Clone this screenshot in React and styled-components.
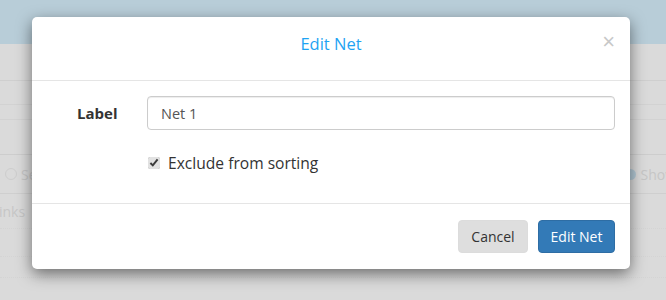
import React from "react";
import styled, { createGlobalStyle } from "styled-components";

const FONT = `"Open Sans", "Noto Sans", sans-serif`;

const GlobalStyle = createGlobalStyle`
  html, body {
    margin: 0;
    padding: 0;
    background: #dadada;
    font-family: ${FONT};
  }
  #root {
    width: 666px;
    height: 300px;
    overflow: hidden;
    position: relative;
  }
`;

const rows = [
  { h: 36, line: "#cfcfcf" },
  { h: 23, line: "#d2d2d2" },
  { h: 14, line: "#d2d2d2" },
  { h: 34, line: "#cdcdcd" },
  { h: 38, line: "#cfcfcf", left: "Se", right: "Show" },
  { h: 34, line: "#d4d4d4", left: "inks", dotted: true },
  { h: 27, line: "#d4d4d4", dotted: true },
  { h: 20, line: "#d4d4d4", dotted: true },
];

export default function App() {
  return (
    <>
      <GlobalStyle />
      <Page>
        <NavBar />
        <Content>
          {rows.map((r, i) => (
            <Row key={i} $h={r.h} $line={r.line} $dotted={r.dotted}>
              <Ghost>
                {r.left === "Se" && <Radio />}
                {r.left}
              </Ghost>
              <Ghost>
                {r.right && <CheckDot />}
                {r.right}
              </Ghost>
            </Row>
          ))}
        </Content>
      </Page>

      <Modal>
        <Header>
          <Title>Edit Net</Title>
          <Close>×</Close>
        </Header>
        <Body>
          <FieldRow>
            <FieldLabel>Label</FieldLabel>
            <Input defaultValue="Net 1" />
          </FieldRow>
          <CheckRow>
            <Check type="checkbox" defaultChecked />
            <CheckText>Exclude from sorting</CheckText>
          </CheckRow>
        </Body>
        <Footer>
          <Button $w={70}>Cancel</Button>
          <Button $w={77} $primary>Edit Net</Button>
        </Footer>
      </Modal>
    </>
  );
}

const Page = styled.div`
  width: 666px;
  height: 300px;
  display: flex;
  flex-direction: column;
`;

const NavBar = styled.div`
  height: 44px;
  background: #b8cdd8;
  flex-shrink: 0;
`;

const Content = styled.div`
  flex: 1;
  display: flex;
  flex-direction: column;
`;

const Row = styled.div`
  height: ${(p) => p.$h}px;
  border-bottom: 1px ${(p) => (p.$dotted ? "dotted" : "solid")} ${(p) => p.$line};
  display: flex;
  justify-content: space-between;
  align-items: center;
  flex-shrink: 0;
`;

const Ghost = styled.span`
  display: flex;
  align-items: center;
  gap: 4px;
  font-size: 14px;
  color: #c6c6c6;
  white-space: nowrap;
  &:first-child {
    margin-left: -1px;
  }
  &:last-child {
    margin-right: -10px;
  }
`;

const Radio = styled.span`
  width: 10px;
  height: 10px;
  border: 1px solid #cdcdcd;
  border-radius: 50%;
  margin-left: 6px;
`;

const CheckDot = styled.span`
  width: 11px;
  height: 11px;
  border-radius: 50%;
  background: #b3c9d6;
`;

const Modal = styled.div`
  position: absolute;
  left: 32px;
  top: 17px;
  width: 598px;
  height: 252px;
  background: #fff;
  border-radius: 5px;
  box-shadow: 0 5px 15px rgba(0, 0, 0, 0.5);
  display: flex;
  flex-direction: column;
`;

const Header = styled.div`
  height: 63px;
  border-bottom: 1px solid #e5e5e5;
  display: flex;
  align-items: center;
  justify-content: center;
  position: relative;
`;

const Title = styled.h4`
  margin: 0;
  font-size: 16.5px;
  font-weight: 400;
  color: #1ea3f3;
  transform: translateY(-5px);
`;

const Close = styled.span`
  position: absolute;
  right: 15px;
  top: 14px;
  font-size: 22px;
  line-height: 1;
  color: #c8c8c8;
  font-family: "Liberation Sans", sans-serif;
`;

const Body = styled.div`
  height: 123px;
  border-bottom: 1px solid #e5e5e5;
  padding: 15px 15px 0 45px;
  box-sizing: border-box;
  display: flex;
  flex-direction: column;
`;

const FieldRow = styled.div`
  display: flex;
  align-items: center;
`;

const FieldLabel = styled.label`
  width: 70px;
  font-size: 15px;
  font-weight: 700;
  color: #333;
`;

const Input = styled.input`
  flex: 1;
  height: 34px;
  box-sizing: border-box;
  border: 1px solid #cccccc;
  border-radius: 4px;
  padding: 0 13px;
  font-family: ${FONT};
  font-size: 14.5px;
  color: #555;
  outline: none;
  box-shadow: inset 0 1px 1px rgba(0, 0, 0, 0.075);
`;

const CheckRow = styled.div`
  display: flex;
  align-items: center;
  margin: 22px 0 0 70px;
  gap: 8px;
`;

const Check = styled.input`
  width: 12px;
  height: 12px;
  margin: 0 0 0 1px;
  accent-color: #e2e2e2;
`;

const CheckText = styled.span`
  font-size: 15.6px;
  color: #333;
`;

const Footer = styled.div`
  flex: 1;
  display: flex;
  justify-content: flex-end;
  align-items: center;
  gap: 10px;
  padding: 0 15px 0;
`;

const Button = styled.button`
  width: ${(p) => p.$w}px;
  height: 33px;
  padding: 0;
  border-radius: 4px;
  border: 1px solid ${(p) => (p.$primary ? "#2e6da4" : "#dcdcdc")};
  background: ${(p) => (p.$primary ? "#337ab7" : "#dedede")};
  color: ${(p) => (p.$primary ? "#fff" : "#333")};
  font-family: ${FONT};
  font-size: 14px;
`;
